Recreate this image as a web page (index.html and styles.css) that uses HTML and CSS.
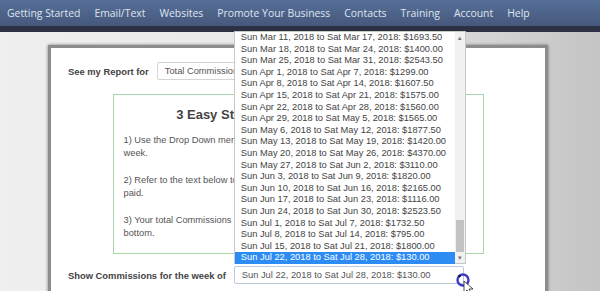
FILE: index.html
```html
<!DOCTYPE html>
<html lang="en">
<head>
  <meta charset="UTF-8">
  <title>Commissions Report</title>
  <link rel="stylesheet" href="styles.css">
</head>
<body>

  <nav class="topnav">
    <a href="#">Getting Started</a>
    <a href="#">Email/Text</a>
    <a href="#">Websites</a>
    <a href="#">Promote Your Business</a>
    <a href="#">Contacts</a>
    <a href="#">Training</a>
    <a href="#">Account</a>
    <a href="#">Help</a>
  </nav>

  <div class="card">
    <div class="row report-row">
      <label>See my Report for</label>
      <div class="fake-select report-select">Total Commissions</div>
    </div>

    <div class="steps">
      <h3>3 Easy Steps to See Your Commissions</h3>
      <p>1) Use the Drop Down menu at the bottom to pick a<br>week.</p>
      <p>2) Refer to the text below to see how much you were<br>paid.</p>
      <p>3) Your total Commissions for the week are at the<br>bottom.</p>
    </div>

    <div class="row week-row">
      <label>Show Commissions for the week of</label>
      <div class="week-wrap">
        <div class="listbox">
          <ul class="options">
            <li>Sun Mar 11, 2018 to Sat Mar 17, 2018: $1693.50</li>
            <li>Sun Mar 18, 2018 to Sat Mar 24, 2018: $1400.00</li>
            <li>Sun Mar 25, 2018 to Sat Mar 31, 2018: $2543.50</li>
            <li>Sun Apr 1, 2018 to Sat Apr 7, 2018: $1299.00</li>
            <li>Sun Apr 8, 2018 to Sat Apr 14, 2018: $1607.50</li>
            <li>Sun Apr 15, 2018 to Sat Apr 21, 2018: $1575.00</li>
            <li>Sun Apr 22, 2018 to Sat Apr 28, 2018: $1560.00</li>
            <li>Sun Apr 29, 2018 to Sat May 5, 2018: $1565.00</li>
            <li>Sun May 6, 2018 to Sat May 12, 2018: $1877.50</li>
            <li>Sun May 13, 2018 to Sat May 19, 2018: $1420.00</li>
            <li>Sun May 20, 2018 to Sat May 26, 2018: $4370.00</li>
            <li>Sun May 27, 2018 to Sat Jun 2, 2018: $3110.00</li>
            <li>Sun Jun 3, 2018 to Sat Jun 9, 2018: $1820.00</li>
            <li>Sun Jun 10, 2018 to Sat Jun 16, 2018: $2165.00</li>
            <li>Sun Jun 17, 2018 to Sat Jun 23, 2018: $1116.00</li>
            <li>Sun Jun 24, 2018 to Sat Jun 30, 2018: $2523.50</li>
            <li>Sun Jul 1, 2018 to Sat Jul 7, 2018: $1732.50</li>
            <li>Sun Jul 8, 2018 to Sat Jul 14, 2018: $795.00</li>
            <li>Sun Jul 15, 2018 to Sat Jul 21, 2018: $1800.00</li>
            <li class="selected">Sun Jul 22, 2018 to Sat Jul 28, 2018: $130.00</li>
          </ul>
          <div class="scrollbar">
            <span class="arrow">&#9652;</span>
            <span class="thumb"></span>
            <span class="arrow">&#9662;</span>
          </div>
        </div>
        <div class="fake-select week-select">Sun Jul 22, 2018 to Sat Jul 28, 2018: $130.00</div>
        <svg class="cursor" width="22" height="22" viewBox="0 0 22 22">
          <circle cx="7" cy="7" r="5.5" fill="none" stroke="#3b3bc8" stroke-width="2.4"/>
          <circle cx="3.5" cy="3" r="1.2" fill="#111"/>
          <path d="M8 8 L8 20 L11 17 L13.5 21.5 L15.5 20.5 L13 16 L17 16 Z" fill="#fff" stroke="#222" stroke-width="0.8"/>
        </svg>
      </div>
    </div>
  </div>

</body>
</html>
```

FILE: styles.css
```css
body {
  margin: 0;
  height: 291px;
  overflow: hidden;
  font-family: "Liberation Sans", Arial, sans-serif;
  background: linear-gradient(to right, #efefef 0%, #e6e6e6 60%, #c4c4c4 100%);
}
.topnav {
  display: flex;
  gap: 14px;
  align-items: center;
  height: 26px;
  padding-left: 7px;
  background: linear-gradient(#566f98, #46587c);
  border-bottom: 6px solid #2b3042;
}
.topnav a {
  font-family: "Open Sans", sans-serif;
  font-size: 10.4px;
  color: #dfe5ef;
  text-decoration: none;
  white-space: nowrap;
}
.card {
  width: 500px;
  height: 260px;
  margin: 13px 0 0 48px;
  background: #fff;
  border: 3px solid #8c8c8c;
  box-shadow: 0 0 3px #777;
  padding-top: 14px;
  box-sizing: border-box;
}
.row {
  display: flex;
  align-items: center;
}
.row label {
  font-size: 9.4px;
  font-weight: bold;
  color: #444;
  margin-left: 17px;
}
.fake-select {
  font-size: 9.3px;
  color: #555;
  background: #fff;
  border: 1px solid #d4d4d4;
  border-radius: 2px;
  height: 18px;
  line-height: 16px;
  padding-left: 7px;
  box-sizing: border-box;
  white-space: nowrap;
}
.report-select {
  margin-left: 8px;
  width: 130px;
}
.steps {
  width: 371px;
  height: 160px;
  margin: 14px auto 0;
  border: 1px solid #a9d3a9;
  box-sizing: border-box;
  padding: 12px 10px 0;
}
.steps h3 {
  margin: 0 0 12px;
  font-size: 13px;
  text-align: center;
  color: #444;
  white-space: nowrap;
}
.steps p {
  margin: 0 0 14px;
  font-size: 9.3px;
  line-height: 13px;
  color: #555;
}
.week-row {
  margin-top: 12px;
}
.week-row label {
  margin-right: 8px;
}
.week-wrap {
  position: relative;
}
.week-select {
  width: 230px;
  border-color: #b9cbe2;
}
.listbox {
  position: absolute;
  left: 0;
  bottom: 20px;
  width: 232px;
  height: 233px;
  display: flex;
  background: #fff;
  border: 1px solid #c8c8c8;
  box-sizing: border-box;
}
.options {
  list-style: none;
  margin: 0;
  padding: 0;
  flex: 1;
}
.options li {
  font-size: 9.3px;
  height: 11.6px;
  line-height: 11.6px;
  padding-left: 6px;
  color: #444;
  white-space: nowrap;
}
.options li.selected {
  background: #2c8cf4;
  color: #fff;
}
.scrollbar {
  width: 10px;
  background: #f1f1f1;
  display: flex;
  flex-direction: column;
  align-items: center;
}
.scrollbar .arrow {
  font-size: 7px;
  color: #777;
  height: 11px;
  line-height: 11px;
}
.scrollbar .thumb {
  width: 8px;
  height: 32px;
  margin-top: auto;
  background: #c3c3c3;
}
.cursor {
  position: absolute;
  left: 222px;
  top: 7px;
}
```
